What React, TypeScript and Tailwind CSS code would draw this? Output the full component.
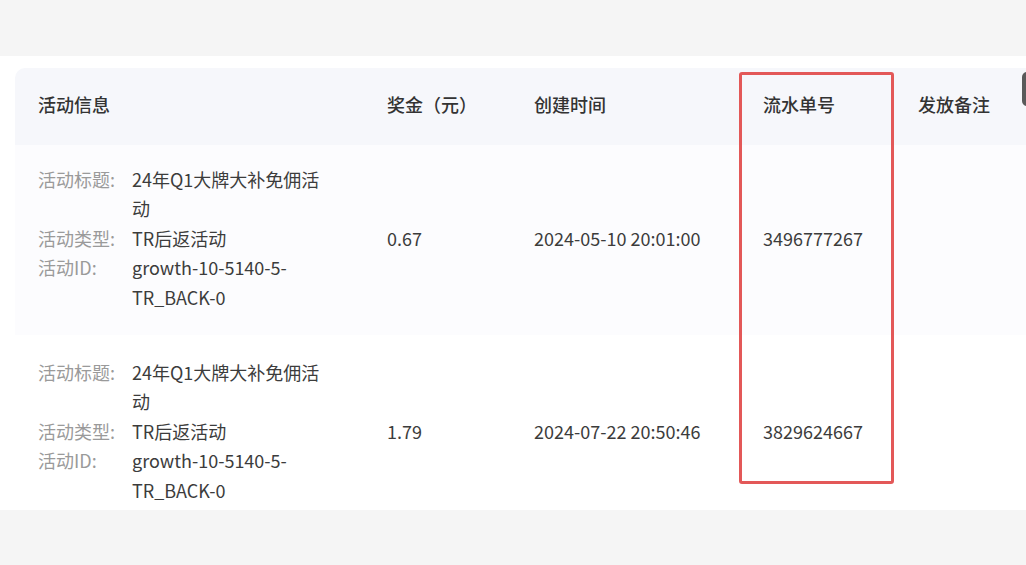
const rows = [
  {
    title: "24年Q1大牌大补免佣活动",
    type: "TR后返活动",
    id: "growth-10-5140-5-TR_BACK-0",
    amount: "0.67",
    time: "2024-05-10 20:01:00",
    serial: "3496777267",
    cls: "bg-[#fcfcfe] pt-[20px] pb-[23px]",
  },
  {
    title: "24年Q1大牌大补免佣活动",
    type: "TR后返活动",
    id: "growth-10-5140-5-TR_BACK-0",
    amount: "1.79",
    time: "2024-07-22 20:50:46",
    serial: "3829624667",
    cls: "bg-white pt-[23px] pb-[22px]",
  },
];

function InfoLine({ label, value }: { label: string; value: string }) {
  return (
    <div className="flex">
      <span className="w-[94px] shrink-0 text-[#9a9a9a]">{label}</span>
      <span className="w-[202px] text-[#3c3c3c]">{value}</span>
    </div>
  );
}

export default function App() {
  return (
    <div
      className="relative w-[1026px] h-[565px] overflow-hidden bg-[#f5f5f5] text-[18px] leading-[29.4px]"
      style={{ fontFamily: '"Noto Sans CJK SC", "Noto Sans", sans-serif' }}
    >
      <div className="mt-[56px] h-[454px] overflow-hidden bg-white pl-[15px] pt-[12px]">
        <div className="w-[1040px] overflow-hidden rounded-tl-[10px]">
          <div className="grid h-[77px] grid-cols-[349px_147px_229px_155px_1fr] items-center bg-[#f6f7fb] pb-[4px] font-medium text-[#333]">
            <div className="pl-[23px]">活动信息</div>
            <div className="pl-[23px]">奖金（元）</div>
            <div className="pl-[23px]">创建时间</div>
            <div className="pl-[23px]">流水单号</div>
            <div className="pl-[23px]">发放备注</div>
          </div>
          {rows.map((r, i) => (
            <div
              key={i}
              className={`grid grid-cols-[349px_147px_229px_155px_1fr] items-center text-[#3c3c3c] ${r.cls}`}
            >
              <div className="pl-[23px]">
                <InfoLine label="活动标题:" value={r.title} />
                <InfoLine label="活动类型:" value={r.type} />
                <InfoLine label="活动ID:" value={r.id} />
              </div>
              <div className="pl-[23px]">{r.amount}</div>
              <div className="pl-[23px]">{r.time}</div>
              <div className="pl-[23px]">{r.serial}</div>
              <div className="pl-[23px]"></div>
            </div>
          ))}
        </div>
      </div>

      {/* annotation box */}
      <div className="absolute left-[739px] top-[72px] h-[412px] w-[155px] rounded-[3px] border-[3px] border-[#e35858]" />
      {/* clipped control at right edge */}
      <div className="absolute left-[1022px] top-[72px] h-[34px] w-[12px] rounded-[5px] bg-[#5a5a5a]" />
    </div>
  );
}
